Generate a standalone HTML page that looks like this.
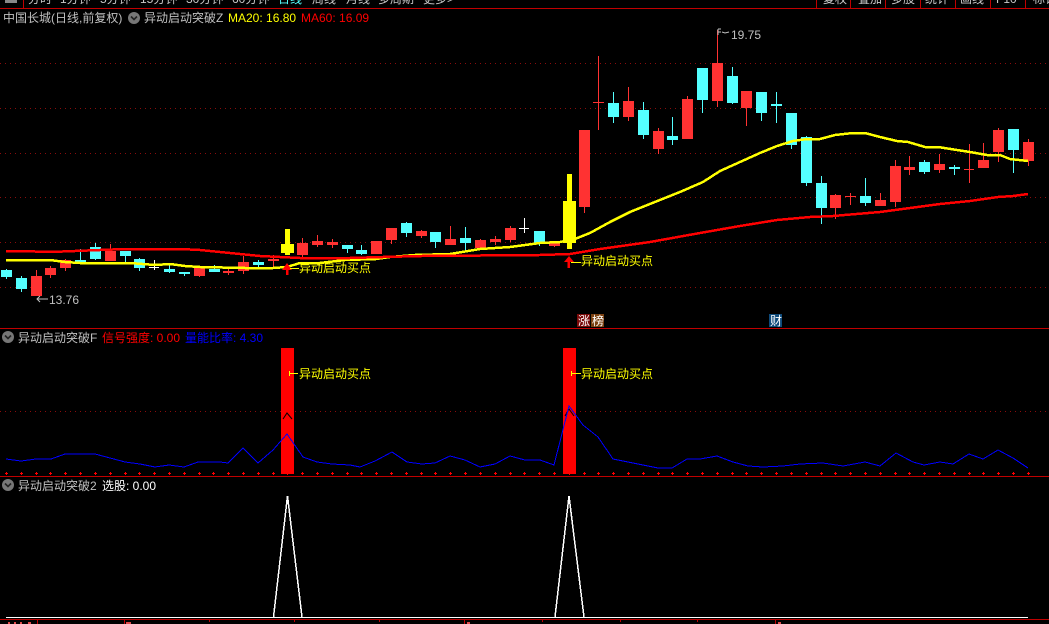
<!DOCTYPE html>
<html><head><meta charset="utf-8"><style>
html,body{margin:0;padding:0;background:#000;width:1049px;height:624px;overflow:hidden}
svg{display:block;position:absolute;left:0;top:0}
text{font-family:"Liberation Sans","WenQuanYi Zen Hei","Noto Sans CJK SC",sans-serif;font-size:12px;white-space:pre}
.c{fill:#c0c0c0}.y{fill:#ffff00}.r{fill:#ff0000}.b{fill:#0000ff}.w{fill:#fff}.t{fill:#c8c8c8}
</style></head><body>
<svg width="1049" height="624" viewBox="0 0 1049 624" xmlns="http://www.w3.org/2000/svg">
<defs><marker id="p" markerUnits="userSpaceOnUse" markerWidth="3" markerHeight="3" refX="1.5" refY="1.5" overflow="visible"><path d="M1 0h1v1h1v1h-1v1h-1v-1h-1v-1h1z" fill="#ff0000"/></marker></defs>
<rect width="1049" height="624" fill="#000"/>

<!-- top bar -->
<g>
<text x="28" y="3" class="t">分时</text><text x="60" y="3" class="t">1分钟</text><text x="100" y="3" class="t">5分钟</text><text x="140" y="3" class="t">15分钟</text><text x="186" y="3" class="t">30分钟</text><text x="232" y="3" class="t">60分钟</text><text x="278" y="3" fill="#54ffff">日线</text><text x="312" y="3" class="t">周线</text><text x="346" y="3" class="t">月线</text><text x="378" y="3" class="t">多周期</text><text x="423" y="3" class="t">更多&gt;</text>
<text x="823" y="3" class="t">复权</text><text x="858" y="3" class="t">叠加</text><text x="891" y="3" class="t">多股</text><text x="925" y="3" class="t">统计</text><text x="960" y="3" class="t">画线</text><text x="996" y="3" class="t">F10</text><text x="1033" y="3" class="t">标记</text>
<rect x="5" y="0" width="12" height="3" fill="#888"/>
</g>
<g shape-rendering="crispEdges" fill="#c00000">
<rect x="0" y="8" width="1049" height="1"/>
<rect x="23" y="0" width="1" height="8"/>
<rect x="816" y="0" width="1" height="8"/><rect x="850" y="0" width="1" height="8"/><rect x="885" y="0" width="1" height="8"/><rect x="920" y="0" width="1" height="8"/><rect x="955" y="0" width="1" height="8"/><rect x="990" y="0" width="1" height="8"/><rect x="1025" y="0" width="1" height="8"/>
<rect x="0" y="328" width="1049" height="1"/>
<rect x="0" y="476" width="1049" height="1"/>
<rect x="0" y="619" width="1049" height="1"/>
<path d="M37 620h1v4h-1zM124 620h1v4h-1zM209 620h1v2h-1zM294 620h1v2h-1zM379 620h1v2h-1zM464 620h1v4h-1zM542 620h1v2h-1zM620 620h1v2h-1zM697 620h1v2h-1zM775 620h1v4h-1z"/>
<path d="M8 622h2v2h-2zM14 622h2v2h-2zM20 622h2v2h-2zM28 622h3v2h-3zM126 622h5v2h-5zM467 622h3v2h-3zM778 622h3v2h-3z" fill="#e04a4a"/>
</g>

<!-- grid -->
<g stroke="#8a0c0c" stroke-width="1" stroke-dasharray="1 4" shape-rendering="crispEdges">
<path d="M0 63.5H1049M0 108.5H1049M0 153.5H1049M0 197.5H1049M0 242.5H1049M0 287.5H1049M0 411.5H1049"/>
</g>

<!-- cyan candles -->
<path shape-rendering="crispEdges" fill="#54ffff" d="M1 270h11v7h-11zM6 269h1v10h-1zM16 278h11v11h-11zM21 276h1v16h-1zM75 260h11v2h-11zM80 249h1v13h-1zM90 247h11v12h-11zM95 243h1v17h-1zM120 251h11v5h-11zM125 251h1v11h-1zM134 259h11v9h-11zM139 258h1v13h-1zM164 269h11v3h-11zM169 265h1v8h-1zM179 272h11v2h-11zM184 272h1v4h-1zM209 269h11v3h-11zM214 265h1v7h-1zM253 262h11v3h-11zM258 260h1v7h-1zM342 245h11v4h-11zM347 245h1v8h-1zM356 250h11v4h-11zM361 245h1v10h-1zM401 223h11v10h-11zM406 222h1v15h-1zM430 232h11v10h-11zM435 232h1v16h-1zM460 238h11v5h-11zM465 227h1v23h-1zM534 231h11v12h-11zM539 231h1v15h-1zM608 103h11v14h-11zM613 92h1v31h-1zM638 110h11v25h-11zM643 102h1v37h-1zM667 136h11v4h-11zM672 117h1v28h-1zM697 68h11v32h-11zM702 68h1v45h-1zM727 76h11v27h-11zM732 67h1v37h-1zM756 92h11v21h-11zM761 92h1v29h-1zM771 104h11v2h-11zM776 92h1v31h-1zM786 113h11v32h-11zM791 113h1v36h-1zM801 137h11v46h-11zM806 136h1v50h-1zM816 183h11v25h-11zM821 176h1v48h-1zM860 196h11v7h-11zM865 178h1v28h-1zM919 162h11v10h-11zM924 160h1v14h-1zM949 167h11v2h-11zM954 165h1v10h-1zM1008 129h11v21h-11zM1013 129h1v44h-1z"/>

<!-- red candles -->
<path shape-rendering="crispEdges" fill="#ff3232" d="M31 276h11v20h-11zM36 270h1v6h-1zM45 268h11v7h-11zM50 266h1v12h-1zM60 260h11v8h-11zM65 259h1v12h-1zM105 251h11v10h-11zM110 244h1v7h-1zM194 268h11v8h-11zM199 268h1v9h-1zM223 271h11v2h-11zM228 269h1v6h-1zM238 262h11v9h-11zM243 256h1v18h-1zM268 259h11v2h-11zM273 255h1v12h-1zM297 243h11v12h-11zM302 238h1v19h-1zM312 241h11v4h-11zM317 235h1v12h-1zM327 242h11v3h-11zM332 239h1v9h-1zM371 241h11v13h-11zM386 228h11v12h-11zM391 240h1v4h-1zM416 231h11v5h-11zM421 230h1v8h-1zM445 239h11v6h-11zM450 226h1v13h-1zM475 240h11v8h-11zM480 239h1v1h-1zM490 239h11v3h-11zM495 236h1v9h-1zM505 228h11v12h-11zM510 226h1v16h-1zM549 241h11v5h-11zM554 241h1v6h-1zM579 130h11v77h-11zM584 207h1v6h-1zM593 102h11v1h-11zM598 56h1v74h-1zM623 101h11v16h-11zM628 87h1v34h-1zM653 131h11v18h-11zM658 128h1v26h-1zM682 99h11v40h-11zM687 96h1v3h-1zM712 63h11v38h-11zM717 30h1v77h-1zM741 91h11v17h-11zM746 108h1v18h-1zM830 195h11v13h-11zM835 194h1v25h-1zM845 196h11v1h-11zM850 193h1v12h-1zM875 200h11v6h-11zM880 193h1v7h-1zM890 166h11v36h-11zM895 160h1v47h-1zM904 167h11v3h-11zM909 156h1v19h-1zM934 164h11v6h-11zM939 154h1v19h-1zM964 169h10v1h-10zM969 144h1v39h-1zM978 160h11v8h-11zM983 143h1v17h-1zM993 130h11v22h-11zM998 128h1v34h-1zM1023 142h11v19h-11zM1028 139h1v27h-1z"/>

<!-- white crosses -->
<path shape-rendering="crispEdges" fill="#fff" d="M149 267h10v1h-10zM154 260h1v10h-1zM519 228h10v1h-10zM524 218h1v15h-1z"/>

<!-- signal bars in main -->
<path shape-rendering="crispEdges" fill="#ffff00" d="M281 244h13v9h-13zM285 229h5v26h-5zM563 201h13v42h-13zM567 174h5v75h-5z"/>

<!-- MA lines -->
<polyline shape-rendering="crispEdges" fill="none" stroke="#ffff00" stroke-width="2.5" points="6,260 50,260 65,262 80,263 130,263 155,265 170,264 185,266 200,267 245,268 273,268 287,267 300,263 320,263 345,260 376,259 390,257 415,255 450,254 480,249 510,247 540,243 560,242 575,239 590,233 610,222 630,212 660,200 680,192 703,182 720,171 740,162 760,153 777,146 793,141 807,139 820,139 835,135 853,133 865,133 880,137 897,141 908,142 925,147 938,147 957,150 970,152 987,155 1000,155 1010,159 1028,161"/>
<polyline shape-rendering="crispEdges" fill="none" stroke="#ff0000" stroke-width="2.5" points="6,251 20,251 50,252 100,250 125,249 180,249 200,250 230,253 260,256 300,258 350,258 383,257 422,256 540,255 570,254 600,249 650,242 700,233 740,226 777,220 810,217 833,216 880,212 910,208 940,204 970,201 998,197 1013,196 1028,194"/>

<!-- up arrows -->
<path fill="#ff0000" d="M287 263l5 7h-3.500v5h-2.500v-5h-4zM569 256l5 6h-4v6h-2.500v-6h-3.500z"/>

<!-- labels main -->
<path shape-rendering="crispEdges" fill="#ffff00" d="M290 268h9v1h-9zM571 262h10v1h-10z"/>
<text x="299" y="272" class="y">异动启动买点</text>
<text x="581" y="265" class="y">异动启动买点</text>
<path fill="none" stroke="#c0c0c0" d="M48 299H37M40 296l-3 3 3 3"/>
<text x="49" y="304" class="c">13.76</text>
<path fill="none" stroke="#c0c0c0" d="M718 29h3M718 32h3M718 29v6M722 32l3 1 4-1"/>
<text x="731" y="39" class="c">19.75</text>

<!-- badges -->
<rect x="577" y="314" width="13" height="13" fill="#7a0a0a"/><rect x="591" y="314" width="13" height="13" fill="#7a4010"/><rect x="769" y="314" width="13" height="13" fill="#0e4a7a"/>
<text x="578" y="325" class="w">涨</text><text x="592" y="325" class="w">榜</text><text x="770" y="325" class="w">财</text>

<!-- title row -->
<text x="3" y="22" class="c">中国长城(日线,前复权)</text>
<circle cx="134" cy="18" r="6" fill="#777"/><path d="M131 16.500l3 3 3-3" fill="none" stroke="#222" stroke-width="1.600"/>
<text x="144" y="22" class="c">异动启动突破Z</text>
<text x="228" y="22" class="y">MA20: 16.80</text>
<text x="301" y="22" class="r">MA60: 16.09</text>

<!-- panel 2 -->
<circle cx="8" cy="337" r="6" fill="#777"/><path d="M5 335.500l3 3 3-3" fill="none" stroke="#222" stroke-width="1.600"/>
<text x="18" y="342" class="c">异动启动突破F</text>
<text x="102" y="342" class="r">信号强度: 0.00</text>
<text x="185" y="342" class="b">量能比率: 4.30</text>
<path shape-rendering="crispEdges" fill="#ff0000" d="M281 348h13v126h-13zM563 348h13v126h-13z"/>
<path fill="none" stroke="#000" d="M283 419l4-6 5 6M565 416l4-7 5 7"/>
<polyline shape-rendering="crispEdges" fill="none" stroke="#0000ff" points="6,459 21,461 36,459 51,459 65,454 95,454 110,458 125,462 140,464 155,467 169,465 184,467 198,462 220,462 228,463 243,448 258,463 273,450 287,434 303,457 317,462 332,464 350,465 360,467 375,461 392,452 407,462 422,464 435,463 450,456 465,460 480,467 495,464 510,456 525,460 540,460 554,465 569,406 583,425 598,437 613,459 628,462 643,465 658,468 672,468 687,459 700,459 717,456 733,462 748,466 763,467 783,466 800,464 823,463 843,466 865,462 880,466 896,453 913,462 924,465 940,462 953,464 969,454 983,459 998,450 1013,458 1028,468"/>
<polyline fill="none" stroke="none" marker-start="url(#p)" marker-mid="url(#p)" marker-end="url(#p)" points="6.5,473.5 21.5,473.5 36.5,473.5 50.5,473.5 65.5,473.5 80.5,473.5 95.5,473.5 110.5,473.5 125.5,473.5 139.5,473.5 154.5,473.5 169.5,473.5 184.5,473.5 199.5,473.5 213.5,473.5 228.5,473.5 243.5,473.5 258.5,473.5 273.500,473.5 287.5,473.5 302.5,473.5 317.5,473.5 332.5,473.5 347.5,473.5 361.5,473.5 376.5,473.5 391.5,473.5 406.5,473.5 421.5,473.5 435.5,473.5 450.5,473.5 465.5,473.5 480.5,473.5 495.5,473.5 510.5,473.5 524.5,473.5 539.5,473.5 554.5,473.5 569.5,473.5 584.5,473.5 598.5,473.5 613.5,473.5 628.5,473.5 643.5,473.5 658.5,473.5 672.5,473.5 687.5,473.5 702.5,473.5 717.5,473.5 732.5,473.5 746.5,473.5 761.5,473.5 776.5,473.5 791.5,473.5 806.5,473.5 821.5,473.5 835.5,473.5 850.5,473.5 865.5,473.5 880.5,473.5 895.5,473.5 909.5,473.5 924.5,473.5 939.5,473.5 954.5,473.5 969.5,473.5 983.5,473.5 998.5,473.5 1013.5,473.5 1028.5,473.5"/>
<path shape-rendering="crispEdges" fill="#ffff00" d="M289 373h9v1h-9zM289 371h1v5h-1zM571 373h10v1h-10zM571 371h1v5h-1z"/>
<text x="299" y="378" class="y">异动启动买点</text>
<text x="581" y="378" class="y">异动启动买点</text>

<!-- panel 3 -->
<circle cx="8" cy="485" r="6" fill="#777"/><path d="M5 483.500l3 3 3-3" fill="none" stroke="#222" stroke-width="1.600"/>
<text x="18" y="490" class="c">异动启动突破2</text>
<text x="102" y="490" class="w">选股: 0.00</text>
<rect x="6" y="617" width="1022" height="1" fill="#fff" shape-rendering="crispEdges"/>
<path shape-rendering="crispEdges" fill="none" stroke="#fff" stroke-width="1.500" d="M273.500 617L287.500 496 302 617M555 617L569 496 584 617"/>
</svg>
</body></html>
